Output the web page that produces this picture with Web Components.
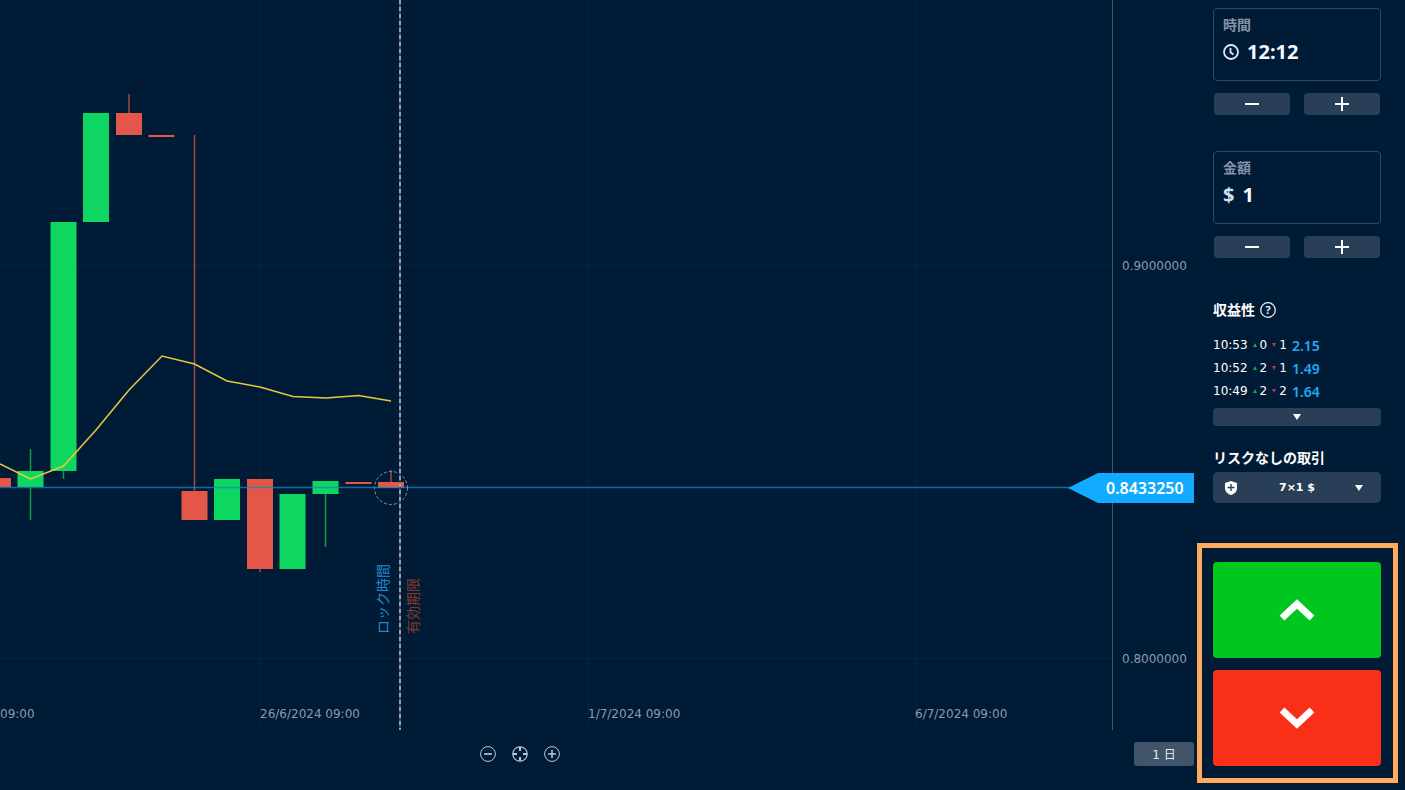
<!DOCTYPE html>
<html lang="ja">
<head>
<meta charset="utf-8">
<meta name="viewport" content="width=device-width, initial-scale=1">
<title>取引</title>
<style>
  body {
    margin: 0;
    background: #001b36;
    color: #fff;
    font-family: "Noto Sans", "Noto Sans CJK JP", sans-serif;
    --button: #293f57;
    --line: #304963;
    --muted: #8494a7;
    --accent: #11aaff;
    --digits: "DejaVu Sans", "Noto Sans CJK JP", sans-serif;
  }
</style>
</head>
<body>
<trade-app></trade-app>

<template id="trade-app">
  <style>
    :host { display: grid; grid-template-columns: minmax(0, 1fr) 211px; min-height: 100vh; }
    main { display: flex; flex-direction: column; min-width: 0; }
    price-chart { flex: 1; }
    footer { display: flex; align-items: center; height: 24px; padding: 12px 0 24px; }
    .zoom { flex: 1; display: flex; justify-content: center; gap: 16px; padding-right: 94px; }
    .zoom button { width: 16px; height: 16px; padding: 0; border: 0; background: none; color: #b9c7d7; }
    .zoom svg { display: block; fill: none; stroke: currentColor; }
    .frame { width: 60px; height: 24px; padding: 0 0 2px; border: 0; border-radius: 3px; background: #41546a; color: #e5ebf1; font: 12px var(--digits); }
  </style>
  <main>
    <price-chart></price-chart>
    <footer>
      <div class="zoom">
        <button aria-label="縮小"><svg width="16" height="16"><circle cx="8" cy="8" r="7.4"/><path d="M4 8h8" stroke-width="1.6"/></svg></button>
        <button aria-label="中央"><svg width="16" height="16"><circle cx="8" cy="8" r="7.2" stroke-width="1.2"/><path d="M8 1v4M8 11v4M1 8h4M11 8h4" stroke-width="2"/></svg></button>
        <button aria-label="拡大"><svg width="16" height="16"><circle cx="8" cy="8" r="7.4"/><path d="M4 8h8M8 4v8" stroke-width="1.6"/></svg></button>
      </div>
      <button class="frame">1 日</button>
    </footer>
  </main>
  <trade-panel></trade-panel>
</template>

<template id="price-chart">
  <style>
    :host { display: grid; grid-template-columns: minmax(0, 1fr) 82px; min-height: 730px; }
    svg { display: block; width: 100%; height: 100%; font: 12px var(--digits); }
    .axis { overflow: visible; }
    .axis, .dates { fill: #8c9aab; }
    .grid { stroke: #09243f; }
    .up rect { fill: #0dd761; } .up line { stroke: #16984f; stroke-width: 1.5; }
    .down rect { fill: #e45648; } .down line { stroke: #a84643; stroke-width: 1.5; }
    .side { font: 14px "Noto Sans CJK JP", sans-serif; }
    .price { font: 600 16px "Noto Sans", sans-serif; fill: #fff; }
  </style>
  <svg class="plot" role="img" aria-label="価格チャート">
    <g class="grid">
      <path d="M260.500 0V730M588.500 0V730M915.500 0V730"/>
      <line x1="0" x2="100%" y1="265.500" y2="265.500"/><line x1="0" x2="100%" y1="658.500" y2="658.500"/>
    </g>
    <g class="candles"></g>
    <polyline points="0,464 30.500,479 63.500,466 96,430 129,390 162,356 194.500,364 227,381 260,387 293,396.500 326,398 358.500,395.500 391,401" fill="none" stroke="#eac83d" stroke-width="1.500"/>
    <line x1="0" x2="100%" y1="487.500" y2="487.500" stroke="#1685c7" stroke-opacity=".75" stroke-width="1.500"/>
    <circle cx="391" cy="488" r="16.500" fill="none" stroke="#8295a7" stroke-dasharray="3 2"/>
    <path d="M400 0V730" stroke="#54404f" stroke-width="2"/>
    <path d="M400 0V730" stroke="#8fa3ba" stroke-width="2" stroke-dasharray="4 3"/>
    <g class="side">
      <text transform="translate(388 634) rotate(-90)" fill="#2389cf">ロック時間</text>
      <text transform="translate(418 634) rotate(-90)" fill="#8a3826">有効期限</text>
    </g>
    <g class="dates"><text x="0" y="718">09:00</text><text x="260" y="718">26/6/2024 09:00</text><text x="588" y="718">1/7/2024 09:00</text><text x="915" y="718">6/7/2024 09:00</text></g>
  </svg>
  <svg class="axis">
    <path d="M.5 0V730" stroke="#45586b"/>
    <text x="10" y="270">0.9000000</text><text x="10" y="663">0.8000000</text>
    <path d="M-44 488L-14 473H82V503H-14Z" fill="#11aaff"/>
    <text class="price" x="-6" y="494">0.8433250</text>
  </svg>
</template>

<template id="trade-panel">
  <style>
    :host { display: flex; flex-direction: column; padding: 8px 24px 0 19px; box-sizing: border-box; }
    stepper-field + stepper-field { margin-top: 36px; }
    h2 { display: flex; align-items: center; gap: 5px; margin: 0; font-size: 14px; line-height: 20px; font-weight: 700; }
    .profit { margin-top: 42px; }
    h2 svg { display: block; }
    table { margin-top: 14px; border-collapse: collapse; width: max-content; font: 12px/23px var(--digits); }
    td { padding: 0 5px 0 0; height: 23px; }
    td:last-child { color: #20aaf5; padding: 0; font: 600 14px/23px "Noto Sans", sans-serif; }
    i { display: inline-block; margin-right: 3px; vertical-align: 2px; border: 2px solid transparent; }
    .u { border-top: 0; border-bottom: 4px solid #13ad3c; }
    .d { border-bottom: 0; border-top: 4px solid #d32d43; }
    .more { display: flex; align-items: center; justify-content: center; height: 18px; margin-top: 5px; padding: 0; border: 0; border-radius: 4px; background: var(--button); }
    .risk { margin-top: 22px; }
    .select { display: grid; grid-template: 31px / 36px 1fr 36px; align-items: center; justify-items: center; margin-top: 4px; border-radius: 5px; background: var(--button); }
    .select svg { grid-row: 1; pointer-events: none; z-index: 1; }
    .shield { grid-column: 1; } .arrow { grid-column: 3; margin-right: 8px; }
    select { grid-area: 1 / 1 / 2 / 4; width: 100%; height: 31px; padding: 0; appearance: none; border: 0; background: none; color: #fff; font: 700 11px var(--digits); text-align-last: center; }
    .actions { display: flex; flex-direction: column; gap: 12px; margin: 40px -17px 0 -16px; padding: 14px 12px 12px 11px; border: 5px solid #ffaa5c; }
    .actions button { height: 96px; padding: 0; border: 0; border-radius: 4px; display: grid; place-items: center; background: #00c620; }
    .actions .sell { background: #fa2f17; }
    .actions svg { fill: none; stroke: #fff; stroke-width: 7; }
  </style>
  <stepper-field label="時間" value="12:12"><svg slot="prefix" width="16" height="16" fill="none" stroke="#dfe8f4" stroke-width="1.800"><circle cx="8" cy="8" r="7"/><path d="M7.500 4v4.500l3 2"/></svg></stepper-field>
  <stepper-field label="金額" value="1"><span slot="prefix">$</span></stepper-field>
  <h2 class="profit">収益性 <svg width="16" height="16"><circle cx="8" cy="8" r="7.300" fill="none" stroke="#e6edf4" stroke-width="1.300"/><text x="8" y="12" text-anchor="middle" font-size="11" font-weight="600" fill="#fff">?</text></svg></h2>
  <table>
    <tr><td>10:53</td><td><i class="u"></i>0</td><td><i class="d"></i>1</td><td>2.15</td></tr>
    <tr><td>10:52</td><td><i class="u"></i>2</td><td><i class="d"></i>1</td><td>1.49</td></tr>
    <tr><td>10:49</td><td><i class="u"></i>2</td><td><i class="d"></i>2</td><td>1.64</td></tr>
  </table>
  <button class="more" aria-label="もっと見る"><svg width="8" height="6"><path d="M0 0h8L4 6z" fill="#fff"/></svg></button>
  <h2 class="risk"><label for="risk">リスクなしの取引</label></h2>
  <div class="select">
    <svg class="shield" width="12" height="14"><path d="M6 0L12 2V7C12 10.500 9.500 13 6 14C2.500 13 0 10.500 0 7V2Z" fill="#fff"/><path d="M2.500 6.500h7M6 3v7" stroke="#293f57" stroke-width="1.400"/></svg>
    <select id="risk"><option>7×1 $</option></select>
    <svg class="arrow" width="8" height="6"><path d="M0 0h8L4 6z" fill="#fff"/></svg>
  </div>
  <div class="actions">
    <button class="buy" aria-label="上"><svg width="36" height="24"><path d="M3 20L18 6L33 20"/></svg></button>
    <button class="sell" aria-label="下"><svg width="36" height="24"><path d="M3 4L18 18L33 4"/></svg></button>
  </div>
</template>

<template id="stepper-field">
  <style>
    :host { display: block; }
    .box { display: flex; flex-direction: column; gap: 5px; box-sizing: border-box; height: 73px; padding: 6px 9px; border: 1px solid var(--line); border-radius: 4px; }
    label { color: var(--muted); font-size: 14px; line-height: 20px; font-weight: 700; }
    .value { display: flex; align-items: center; gap: 8px; font-size: 20px; line-height: 24px; font-weight: 700; }
    ::slotted(*) { flex: none; color: #d5dfed; }
    input { flex: 1; min-width: 0; height: 24px; padding: 0; border: 0; outline: 0; background: none; color: #f4f8ff; font: inherit; }
    .steps { display: grid; grid-template-columns: 1fr 1fr; gap: 14px; margin-top: 12px; padding: 0 1px; }
    button { display: grid; place-items: center; height: 22px; padding: 0; border: 0; border-radius: 4px; background: var(--button); }
    svg { display: block; stroke: #fff; stroke-width: 2; }
  </style>
  <div class="box">
    <label for="value"></label>
    <div class="value"><slot name="prefix"></slot><input id="value"></div>
  </div>
  <div class="steps">
    <button aria-label="減らす"><svg width="14" height="14"><path d="M0 7h14"/></svg></button>
    <button aria-label="増やす"><svg width="14" height="14"><path d="M0 7h14M7 0v14"/></svg></button>
  </div>
</template>

<script>
  class TemplateElement extends HTMLElement {
    constructor() {
      super();
      this.attachShadow({ mode: 'open' }).append(
        document.getElementById(this.localName).content.cloneNode(true));
    }
  }

  class StepperField extends TemplateElement {
    connectedCallback() {
      this.shadowRoot.querySelector('label').textContent = this.getAttribute('label');
      this.shadowRoot.querySelector('input').value = this.getAttribute('value');
    }
  }

  // direction, centre x, body top, body bottom, wick top, wick bottom
  const CANDLES = [
    ['down', -2, 478, 487, 478, 487],
    ['up', 30.5, 471, 487, 449, 520],
    ['up', 63.5, 222, 471, 222, 479],
    ['up', 96, 113, 222, 113, 222],
    ['down', 129, 113, 135, 94, 135],
    ['down', 161.5, 135, 137, 135, 137],
    ['down', 194.500, 491, 520, 135, 520],
    ['up', 227, 479, 520, 479, 520],
    ['down', 260, 479, 569, 479, 572],
    ['up', 292.500, 494, 569, 494, 569],
    ['up', 325.500, 481, 494, 481, 547],
    ['down', 358.500, 482, 484, 482, 484],
    ['down', 391, 482, 488, 470, 488]
  ];

  class PriceChart extends TemplateElement {
    connectedCallback() {
      this.shadowRoot.querySelector('.candles').innerHTML = CANDLES.map(
        ([kind, x, top, bottom, high, low]) =>
          `<g class="${kind}"><line x1="${x}" x2="${x}" y1="${high}" y2="${low}"/>` +
          `<rect x="${x - 13}" y="${top}" width="26" height="${bottom - top}"/></g>`).join('');
    }
  }

  customElements.define('stepper-field', StepperField);
  customElements.define('price-chart', PriceChart);
  customElements.define('trade-panel', class extends TemplateElement {});
  customElements.define('trade-app', class extends TemplateElement {});
</script>
</body>
</html>
